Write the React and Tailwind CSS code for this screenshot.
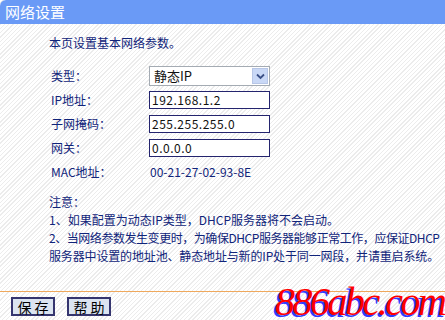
const font = "[font-family:'Noto_Sans_CJK_SC','Liberation_Sans',sans-serif]";

function Field({ value }) {
  return (
    <div className="flex h-[18px] w-[121px] items-center border border-[#24246e] bg-white pl-[2px] text-[12px] leading-none text-[#111] tracking-[0.5px]">
      {value}
    </div>
  );
}

function Btn({ label }) {
  return (
    <div className="flex h-[19px] w-[44px] items-center justify-center border-2 border-[#35356f] bg-[#dbe4f0] text-[14px] leading-none text-black">
      {label}
    </div>
  );
}

export default function App() {
  return (
    <div
      className={`relative h-[320px] w-[445px] overflow-hidden bg-[repeating-linear-gradient(135deg,#ffffff_0px,#ffffff_2px,#ececec_2px,#ececec_3px)] ${font}`}
    >
      {/* title bar */}
      <div className="h-[24px] rounded-tl-[6px] bg-[#6a9af6] pl-[5px] text-[15px] leading-[24px] text-white">
        网络设置
      </div>

      <div className="pl-[49px] text-[12px] text-[#10247a]">
        <p className="mt-[10px] leading-[18px]">本页设置基本网络参数。</p>

        {/* form */}
        <div className="mt-[12px] grid grid-cols-[98px_auto] pl-[2px]">
          <div className="flex h-[24px] items-center">类型：</div>
          <div className="flex h-[24px] items-center">
            <div className="flex h-[20px] w-[121px] items-center justify-between border border-[#a4abb3] bg-white pl-[4px] pr-[1px] text-[13px] text-[#111]">
              <span>静态IP</span>
              <span className="flex h-[16px] w-[16px] items-center justify-center border border-[#b7c6e6] bg-[#c9d8f6]">
                <svg width="9" height="7" viewBox="0 0 9 7">
                  <path d="M1 1.5 L4.5 5 L8 1.5" fill="none" stroke="#3a4f86" strokeWidth="1.8" />
                </svg>
              </span>
            </div>
          </div>

          <div className="flex h-[24px] items-center">IP地址：</div>
          <div className="flex h-[24px] items-center"><Field value="192.168.1.2" /></div>

          <div className="flex h-[24px] items-center">子网掩码：</div>
          <div className="flex h-[24px] items-center"><Field value="255.255.255.0" /></div>

          <div className="flex h-[24px] items-center">网关：</div>
          <div className="flex h-[24px] items-center"><Field value="0.0.0.0" /></div>

          <div className="flex h-[24px] items-center">MAC地址：</div>
          <div className="flex h-[24px] items-center pl-[1px]">00-21-27-02-93-8E</div>
        </div>

        {/* notes */}
        <div className="mt-[9px] whitespace-nowrap leading-[18px]">
          <p>注意：</p>
          <p>1、如果配置为动态IP类型，DHCP服务器将不会启动。</p>
          <p className="tracking-[-0.45px]">2、当网络参数发生变更时，为确保DHCP服务器能够正常工作，应保证DHCP</p>
          <p className="tracking-[-0.15px]">服务器中设置的地址池、静态地址与新的IP处于同一网段，并请重启系统。</p>
        </div>
      </div>

      {/* footer */}
      <div className="mt-[26px] border-t border-[#efa85c]" />
      <div className="mt-[5px] flex gap-[12px] pl-[11px]">
        <Btn label="保 存" />
        <Btn label="帮 助" />
      </div>

      {/* watermark */}
      <div className="absolute left-[275px] top-[284px] text-[40px] italic leading-[36px] tracking-[-2.5px] text-[#ff0000] [font-family:'Liberation_Serif',serif] [text-shadow:-2px_2px_0_#2f3cff]">
        886abc.com
      </div>
    </div>
  );
}
